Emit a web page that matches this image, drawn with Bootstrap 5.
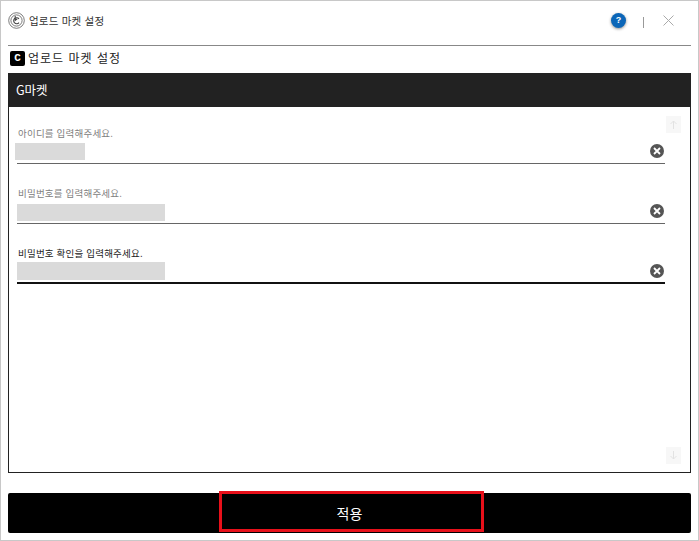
<!DOCTYPE html>
<html lang="ko">
<head>
  <meta charset="UTF-8">
  <meta name="viewport" content="width=device-width, initial-scale=1.0">
  <title>업로드 마켓 설정</title>
  <link href="https://cdn.jsdelivr.net/npm/bootstrap@5.3.3/dist/css/bootstrap.min.css" rel="stylesheet">
  <style>
    html, body {
      margin: 0;
      background: #fff;
      font-family: "Noto Sans CJK KR", "Liberation Sans", sans-serif;
    }
    .app-window {
      width: 699px;
      height: 541px;
      padding: 0 7px;
      border: 1px solid #c8c8c8;
      color: #222;
    }
    .title-bar {
      height: 45px;
      padding-bottom: 5px;
      border-bottom: 1px solid #888;
      flex: none;
    }
    .title-text {
      font-size: 10.5px;
      color: #333;
      letter-spacing: .2px;
    }
    .help-btn {
      width: 15px;
      height: 15px;
      margin-right: 17px;
      background: #0b66b8;
      color: #fff;
      font: 700 9px/15px "Liberation Sans", sans-serif;
      text-align: center;
      box-shadow: 0 1px 3px rgba(0, 0, 0, .45);
    }
    .title-sep {
      width: 1px;
      height: 11px;
      margin: 3px 19px 0 0;
      background: #999;
    }
    .close-btn {
      margin-right: 17px;
    }
    .sub-head {
      height: 27px;
      padding-bottom: 3px;
      flex: none;
      font-size: 12px;
      color: #222;
      letter-spacing: 1px;
    }
    .c-badge {
      width: 15px;
      height: 15px;
      margin: 0 3px 0 2px;
      border-radius: 2px;
      background: #000;
      color: #fff;
      font: 700 11px/15px "Liberation Mono", monospace;
      letter-spacing: 0;
      text-align: center;
    }
    .market-head {
      height: 34px;
      flex: none;
      padding-left: 8px;
      background: #222;
      color: #fff;
      font-size: 12.5px;
    }
    .market-body {
      height: 366px;
      flex: none;
      border: 1px solid #222;
      border-top: 0;
    }
    .field-list {
      width: 656px;
      padding: 17px 0 0 8px;
      flex: none;
    }
    .field-item {
      height: 40px;
      margin-bottom: 20px;
      border-bottom: 1px solid #666;
    }
    .field-item.is-active {
      border-bottom: 2px solid #111;
    }
    .field-label {
      height: 18px;
      padding-left: 1px;
      font-size: 9.5px;
      line-height: 18px;
      color: #808080;
      letter-spacing: .2px;
    }
    .is-active .field-label {
      color: #222;
    }
    .field-row {
      height: 21px;
    }
    .is-active .field-row {
      height: 20px;
    }
    .mask-bar {
      height: 17px;
      background: #dadada;
    }
    .mask-id {
      width: 70px;
      margin: 0 0 2px -2px;
    }
    .mask-pw {
      width: 148px;
    }
    .is-active .mask-pw {
      height: 18px;
      margin-bottom: 2px;
    }
    .clear-btn {
      margin: 0 1px 3px 0;
      flex: none;
    }
    .scroll-col {
      width: 15px;
      margin: 9px 9px 8px 0;
      flex: none;
    }
    .scroll-btn {
      height: 17px;
      background: #f7f7f7;
    }
    .apply-btn {
      height: 40px;
      margin-top: 20px;
      flex: none;
      border: 0;
      border-radius: 2px;
      background: #000;
      color: #fff;
      font-size: 14px;
    }
    .red-mark {
      position: absolute;
      left: 211px;
      top: -2px;
      width: 265px;
      height: 41px;
      border: 3px solid #e8101a;
    }
  </style>
</head>
<body>
  <div class="app-window d-flex flex-column">
    <div class="title-bar d-flex align-items-center">
      <svg width="17" height="17" viewBox="0 0 17 17" class="me-1" fill="none" stroke="#444">
        <circle cx="8.5" cy="8.5" r="7.8" stroke-width=".7"/>
        <circle cx="8.5" cy="8.5" r="5.6" stroke-width=".7"/>
        <path d="M11 6.8A3 3 0 1 0 11 10.6" stroke-width="1.1"/>
        <path d="M7.2 4v4.4l2-1.6" stroke-width="1.1"/>
      </svg>
      <span class="title-text">업로드 마켓 설정</span>
      <div class="help-btn rounded-circle ms-auto">?</div>
      <div class="title-sep"></div>
      <svg class="close-btn" width="11" height="11" viewBox="0 0 11 11" stroke="#aaa" stroke-width="1" fill="none">
        <path d="M.5.5l10 10M10.5.5l-10 10"/>
      </svg>
    </div>
    <div class="sub-head d-flex align-items-center">
      <span class="c-badge">C</span>
      <span>업로드 마켓 설정</span>
    </div>
    <div class="market-head d-flex align-items-center">G마켓</div>
    <div class="market-body d-flex justify-content-between">
      <div class="field-list">
        <div class="field-item">
          <div class="field-label">아이디를 입력해주세요.</div>
          <div class="field-row d-flex justify-content-between align-items-center">
            <div class="mask-bar mask-id"></div>
            <svg class="clear-btn" width="14" height="14" viewBox="0 0 14 14"><circle cx="7" cy="7" r="7" fill="#555"/><path d="M4 4l6 6M10 4l-6 6" stroke="#fff" stroke-width="1.8"/></svg>
          </div>
        </div>
        <div class="field-item">
          <div class="field-label">비밀번호를 입력해주세요.</div>
          <div class="field-row d-flex justify-content-between align-items-center">
            <div class="mask-bar mask-pw"></div>
            <svg class="clear-btn" width="14" height="14" viewBox="0 0 14 14"><circle cx="7" cy="7" r="7" fill="#555"/><path d="M4 4l6 6M10 4l-6 6" stroke="#fff" stroke-width="1.8"/></svg>
          </div>
        </div>
        <div class="field-item is-active">
          <div class="field-label">비밀번호 확인을 입력해주세요.</div>
          <div class="field-row d-flex justify-content-between align-items-center">
            <div class="mask-bar mask-pw"></div>
            <svg class="clear-btn" width="14" height="14" viewBox="0 0 14 14"><circle cx="7" cy="7" r="7" fill="#555"/><path d="M4 4l6 6M10 4l-6 6" stroke="#fff" stroke-width="1.8"/></svg>
          </div>
        </div>
      </div>
      <div class="scroll-col d-flex flex-column justify-content-between">
        <div class="scroll-btn d-flex align-items-center justify-content-center">
          <svg width="7" height="9" viewBox="0 0 7 9" fill="none" stroke="#e2e2e2"><path d="M3.5 9V1M.5 4l3-3 3 3"/></svg>
        </div>
        <div class="scroll-btn d-flex align-items-center justify-content-center">
          <svg width="7" height="9" viewBox="0 0 7 9" fill="none" stroke="#e2e2e2"><path d="M3.5 0v8M.5 5l3 3 3-3"/></svg>
        </div>
      </div>
    </div>
    <button type="button" class="apply-btn btn position-relative p-0">적용<span class="red-mark"></span></button>
  </div>
  <script src="https://cdn.jsdelivr.net/npm/bootstrap@5.3.3/dist/js/bootstrap.bundle.min.js"></script>
</body>
</html>
